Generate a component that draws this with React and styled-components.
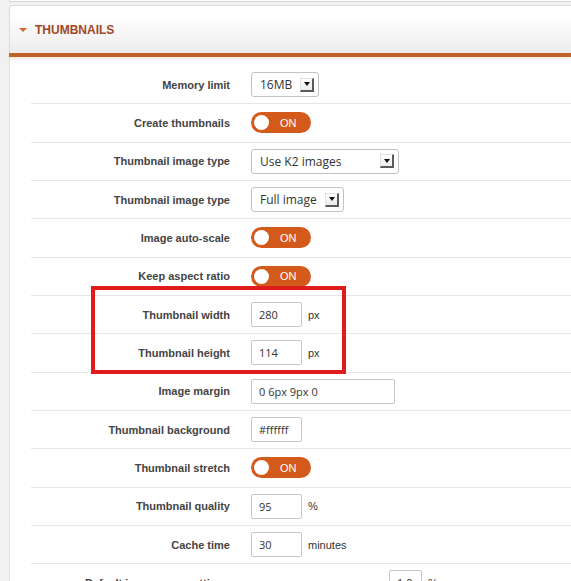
import React from "react";
import styled, { createGlobalStyle } from "styled-components";

const Global = createGlobalStyle`
  html, body { margin: 0; padding: 0; background: #f1f1f1; overflow: hidden; }
  body { font-family: "Liberation Sans", Arial, sans-serif; }
  *, *::before, *::after { box-sizing: border-box; }
`;

const Page = styled.div`
  width: 571px;
  height: 581px;
  overflow: hidden;
  background: #f1f1f1;
`;

const PrevEdge = styled.div`
  margin-left: 9px;
  height: 2px;
  background: #fbfbfb;
  border-bottom: 1px solid #d9d9d9;
  border-left: 1px solid #dedede;
`;

const Header = styled.div`
  margin: 3px 0 0 9px;
  height: 48px;
  display: flex;
  align-items: center;
  gap: 8px;
  padding-left: 9px;
  border: 1px solid #dcdcdc;
  border-right: none;
  border-bottom: none;
  border-top-left-radius: 4px;
  background: linear-gradient(#ffffff 20%, #ececec);
`;

const Caret = styled.span`
  width: 0;
  height: 0;
  border-left: 4px solid transparent;
  border-right: 4px solid transparent;
  border-top: 4px solid #d0692b;
  margin-top: 1px;
`;

const Title = styled.span`
  font: bold 12px "Liberation Sans", Arial, sans-serif;
  color: #a3471f;
`;

const Bar = styled.div`
  margin-left: 9px;
  height: 4px;
  background: #c2612a;
  box-shadow: 0 2px 3px rgba(225, 120, 60, 0.18);
  position: relative;
  z-index: 1;
`;

const Content = styled.div`
  margin-left: 9px;
  border-left: 1px solid #e0e0e0;
  background: #ffffff;
  padding: 9px 0 0 21px;
`;

const Row = styled.div`
  display: grid;
  grid-template-columns: ${(p) => (p.$wide ? "337px" : "199px")} 1fr;
  column-gap: 20px;
  align-items: center;
  height: 38.33px;
  border-bottom: 1px solid #e6e6e6;
`;

const Label = styled.div`
  font: bold 11px "Liberation Sans", Arial, sans-serif;
  color: #444;
  text-align: ${(p) => (p.$left ? "left" : "right")};
  padding-left: ${(p) => (p.$left ? "54px" : "0")};
  white-space: nowrap;
`;

const Control = styled.div`
  display: flex;
  align-items: center;
  padding-left: 1px;
`;

const Select = styled.div`
  display: inline-flex;
  align-items: center;
  justify-content: space-between;
  width: ${(p) => p.$w}px;
  height: 25px;
  padding: 0 4px 0 8px;
  border: 1px solid #c2c2c2;
  border-radius: 3px;
  background: #fff;
  font: 12px "Open Sans", "DejaVu Sans", sans-serif;
  color: #333;
`;

const Arrow = styled.span`
  width: 14px;
  height: 14px;
  display: flex;
  align-items: center;
  justify-content: center;
  background: linear-gradient(#ffffff, #ececec);
  border-top: 1px solid #e2e2e2;
  border-left: 1px solid #e2e2e2;
  border-right: 2px solid #5a5a5a;
  border-bottom: 2px solid #5a5a5a;
  &::before {
    content: "";
    width: 0;
    height: 0;
    border-left: 3px solid transparent;
    border-right: 3px solid transparent;
    border-top: 4px solid #111;
  }
`;

const Toggle = styled.div`
  width: 60px;
  height: 21px;
  border-radius: 11px;
  background: #d35a1b;
  display: flex;
  align-items: center;
  padding-left: 3px;
  gap: 11px;
  &::before {
    content: "";
    width: 15px;
    height: 15px;
    border-radius: 50%;
    background: #fff;
  }
`;

const ToggleText = styled.span`
  font: 11px "Liberation Sans", Arial, sans-serif;
  color: #fff;
`;

const Input = styled.input`
  width: ${(p) => p.$w}px;
  height: 25px;
  padding: 0 0 0 7px;
  border: 1px solid #c6c6c6;
  border-radius: 2px;
  background: #fff;
  font: 11px "Open Sans", "DejaVu Sans", sans-serif;
  color: #333;
  outline: none;
`;

const Unit = styled.span`
  margin-left: 6px;
  font: 11px "Liberation Sans", Arial, sans-serif;
  color: #333;
`;

const Highlight = styled.div`
  position: relative;
  &::after {
    content: "";
    position: absolute;
    left: 60px;
    top: -10px;
    width: 255px;
    height: 88px;
    border: 4px solid #e01b1b;
    pointer-events: none;
  }
`;

const Switch = () => (
  <Toggle>
    <ToggleText>ON</ToggleText>
  </Toggle>
);

const Dropdown = ({ w, children }) => (
  <Select $w={w}>
    <span>{children}</span>
    <Arrow />
  </Select>
);

const Field = ({ label, children, wide }) => (
  <Row $wide={wide}>
    <Label $left={wide}>{label}</Label>
    <Control>{children}</Control>
  </Row>
);

export default function App() {
  return (
    <Page>
      <Global />
      <PrevEdge />
      <Header>
        <Caret />
        <Title>THUMBNAILS</Title>
      </Header>
      <Bar />
      <Content>
        <Field label="Memory limit">
          <Dropdown w={68}>16MB</Dropdown>
        </Field>
        <Field label="Create thumbnails">
          <Switch />
        </Field>
        <Field label="Thumbnail image type">
          <Dropdown w={148}>Use K2 images</Dropdown>
        </Field>
        <Field label="Thumbnail image type">
          <Dropdown w={93}>Full image</Dropdown>
        </Field>
        <Field label="Image auto-scale">
          <Switch />
        </Field>
        <Field label="Keep aspect ratio">
          <Switch />
        </Field>
        <Highlight>
          <Field label="Thumbnail width">
            <Input $w={51} defaultValue="280" readOnly />
            <Unit>px</Unit>
          </Field>
          <Field label="Thumbnail height">
            <Input $w={51} defaultValue="114" readOnly />
            <Unit>px</Unit>
          </Field>
        </Highlight>
        <Field label="Image margin">
          <Input $w={144} defaultValue="0 6px 9px 0" readOnly />
        </Field>
        <Field label="Thumbnail background">
          <Input $w={51} defaultValue="#ffffff" readOnly />
        </Field>
        <Field label="Thumbnail stretch">
          <Switch />
        </Field>
        <Field label="Thumbnail quality">
          <Input $w={51} defaultValue="95" readOnly />
          <Unit>%</Unit>
        </Field>
        <Field label="Cache time">
          <Input $w={51} defaultValue="30" readOnly />
          <Unit>minutes</Unit>
        </Field>
        <Field label="Default image crop setting" wide>
          <Input $w={33} defaultValue="1.0" readOnly />
          <Unit>%</Unit>
        </Field>
      </Content>
    </Page>
  );
}
